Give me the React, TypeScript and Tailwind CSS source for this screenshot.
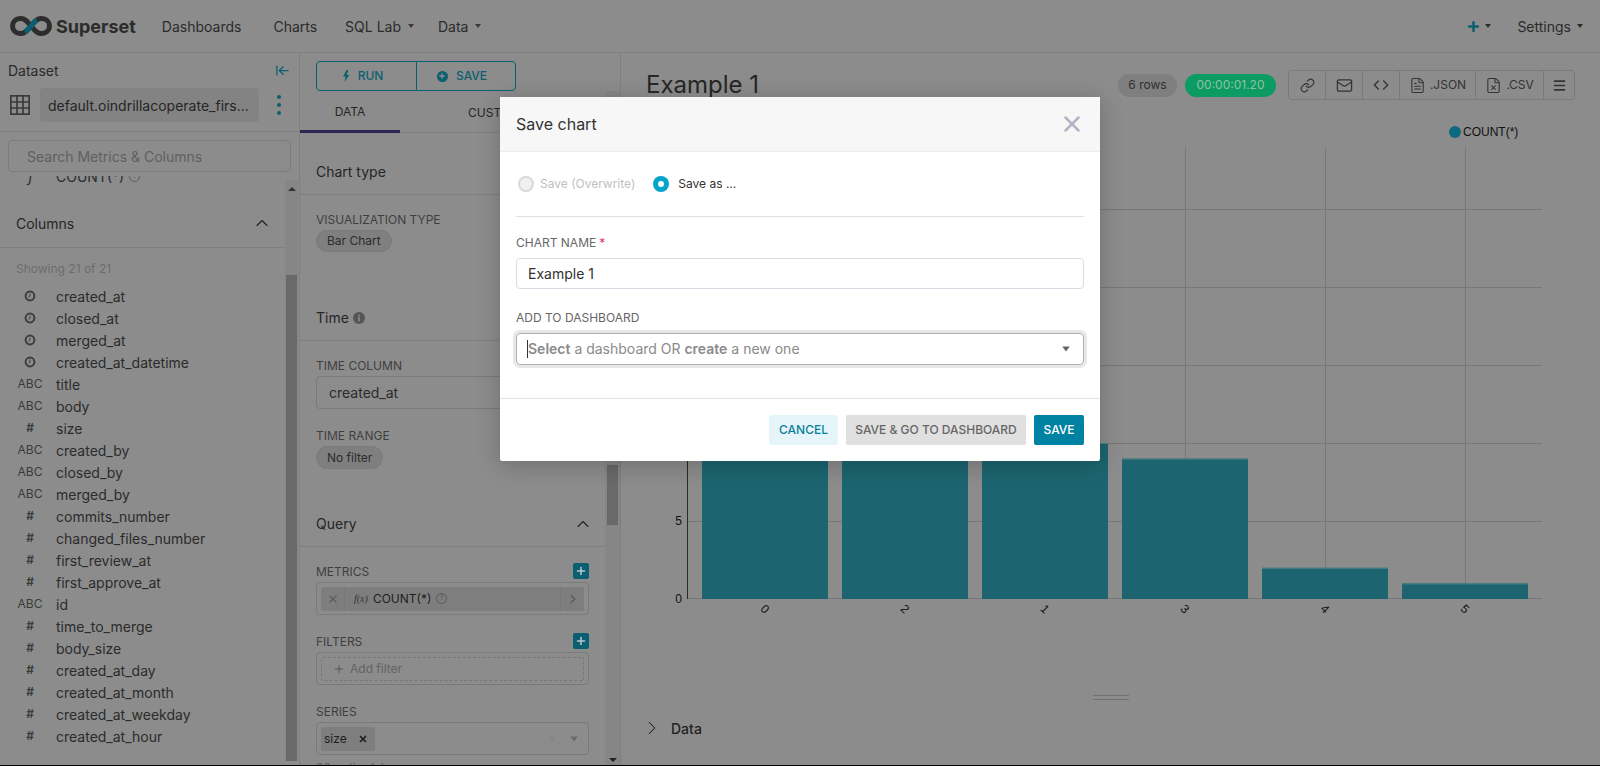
import React from "react";
import { ChevronRight, ChevronUp, Code, FileText, FileX, Link, Mail, Menu, X, Plus, ArrowLeftToLine } from "lucide-react";

const Caret = ({ className = "border-t-[#3a3a3a]" }: { className?: string }) => (
  <span className={"inline-block h-0 w-0 border-x-[3.5px] border-t-[4px] border-x-transparent " + className} />
);

const Clock = () => (
  <svg width="12" height="12" viewBox="0 0 12 12" fill="none" stroke="#3d3d3d">
    <circle cx="6" cy="6" r="4.4" strokeWidth="2" />
    <path d="M6 3.6V6.2L4.4 7.4" strokeWidth="1" />
  </svg>
);

const InfoDot = () => (
  <svg width="12" height="12" viewBox="0 0 12 12">
    <circle cx="6" cy="6" r="6" fill="#555" />
    <rect x="5.2" y="5" width="1.6" height="4.4" fill="#8c8c8c" />
    <circle cx="6" cy="3.4" r="1" fill="#8c8c8c" />
  </svg>
);

const TableIcon = () => (
  <svg width="20" height="20" viewBox="0 0 20 20" fill="none" stroke="#3a3a3a" strokeWidth="1.7">
    <rect x="0.85" y="0.85" width="18.3" height="18.3" />
    <path d="M7 1V19M13 1V19M1 7H19M1 13H19" />
  </svg>
);

const Bolt = () => (
  <svg width="8" height="12" viewBox="0 0 8 12" fill="currentColor">
    <path d="M4.6 0L1 6.4H3.6L2.4 12L7.4 4.8H4.6L6.4 0Z" />
  </svg>
);

const columns: [string, string][] = [
  ["t", "created_at"], ["t", "closed_at"], ["t", "merged_at"], ["t", "created_at_datetime"],
  ["a", "title"], ["a", "body"], ["n", "size"], ["a", "created_by"], ["a", "closed_by"], ["a", "merged_by"],
  ["n", "commits_number"], ["n", "changed_files_number"], ["n", "first_review_at"], ["n", "first_approve_at"],
  ["a", "id"], ["n", "time_to_merge"], ["n", "body_size"], ["n", "created_at_day"], ["n", "created_at_month"],
  ["n", "created_at_weekday"], ["n", "created_at_hour"],
];

const Label = ({ children }: { children: React.ReactNode }) => (
  <div className="h-4 pt-px text-[12px] leading-4 text-[#3f3f3f]">{children}</div>
);

const SectionHead = ({ children, className }: { children: React.ReactNode; className: string }) => (
  <div className={"flex h-[46px] items-center justify-between border-b border-[#7f7f7f] pl-4 pr-3 text-[14px] text-[#262626] " + className}>
    {children}
  </div>
);

const AddBtn = () => (
  <span className="flex h-4 w-4 items-center justify-center rounded-[2px] bg-[#0c5f70] text-[#b8c9cd]">
    <Plus size={12} strokeWidth={3} />
  </span>
);

const Pill = ({ children, className }: { children: React.ReactNode; className: string }) => (
  <div className={"inline-flex items-center rounded-full border border-[#7a7a7a] bg-[#7f7f7f] px-[10px] text-[12px] text-[#2b2b2b] " + className}>
    {children}
  </div>
);

const Seg = ({ children, w, last }: { children: React.ReactNode; w: string; last?: boolean }) => (
  <div className={"flex h-full items-center justify-center gap-[4px] text-[12px] text-[#333] " + w + (last ? "" : " border-r border-[#797979]")}>
    {children}
  </div>
);

function Chart() {
  const bars: [number, number][] = [[702, 10], [842, 10], [982, 10], [1122, 9], [1262, 2], [1402, 1]];
  const base = 599;
  const unit = 15.6;
  return (
    <svg className="block" width="979" height="590" viewBox="621 100 979 590">
      <circle cx="1455" cy="132" r="6" fill="#0c6a80" />
      <text x="1463" y="136" fontFamily="Liberation Sans, sans-serif" fontSize="12" fill="#111">COUNT(*)</text>
      {[765.5, 905.5, 1045.5, 1185.5, 1325.5, 1465.5].map((x) => (
        <line key={x} x1={x} x2={x} y1="147" y2={base} stroke="#787878" />
      ))}
      {[209.5, 287.5, 365.5, 443.5, 521.5, 598.5].map((y) => (
        <line key={y} x1="688" x2="1542" y1={y} y2={y} stroke="#787878" />
      ))}
      <line x1="687.5" x2="687.5" y1="147" y2={base} stroke="#2a2a2a" />
      {bars.map(([x, v]) => (
        <g key={x}>
          <rect x={x} y={base - v * unit} width="126" height={v * unit} fill="#196470" fillOpacity="0.97" />
          <rect x={x} y={base - v * unit} width="126" height="1" fill="#4f8086" />
        </g>
      ))}
      <text x="682" y="525" textAnchor="end" fontFamily="Liberation Sans, sans-serif" fontSize="12" fill="#111">5</text>
      <text x="682" y="603" textAnchor="end" fontFamily="Liberation Sans, sans-serif" fontSize="12" fill="#111">0</text>
      {["0", "2", "1", "3", "4", "5"].map((t, i) => (
        <text key={t} x={765 + i * 140} y="613" textAnchor="middle" transform={`rotate(45 ${765 + i * 140} 609)`} fontFamily="Liberation Sans, sans-serif" fontSize="12" fill="#111">
          {t}
        </text>
      ))}
    </svg>
  );
}

function Sidebar() {
  return (
    <aside className="flex h-full w-[300px] shrink-0 flex-col border-r border-[#7f7f7f]">
      <div className="h-[79px] shrink-0 border-b border-[#7f7f7f]">
        <div className="mt-2 flex h-[18px] items-center justify-between pl-2 pr-[9px] text-[14px] text-[#2b2b2b]">
          <span>Dataset</span>
          <ArrowLeftToLine size={15} className="text-[#0c5f70]" strokeWidth={2} />
        </div>
        <div className="mt-[9px] flex h-[34px] items-center pl-[10px]">
          <TableIcon />
          <div className="ml-[10px] flex h-full w-[219px] items-center rounded-[4px] bg-[#838383] pl-2 text-[14px] text-[#262626]">
            default.oindrillacoperate_firs...
          </div>
          <div className="ml-[18px] flex flex-col gap-[4px]">
            <span className="h-1 w-1 rounded-full bg-[#0c5f70]" />
            <span className="h-1 w-1 rounded-full bg-[#0c5f70]" />
            <span className="h-1 w-1 rounded-full bg-[#0c5f70]" />
          </div>
        </div>
      </div>
      <div className="mx-2 mt-2 flex h-[32px] shrink-0 items-center rounded-[4px] border border-[#7a7a7a] pl-[18px] text-[14px] text-[#606060]">
        Search Metrics &amp; Columns
      </div>
      <div className="flex min-h-0 flex-1 pr-px">
        <div className="mt-[4px] min-w-0 flex-1 overflow-hidden">
          <div className="-mt-[11px] flex h-[22px] items-center text-[14px] text-[#2b2b2b]">
            <span className="w-[56px] pl-[28px] italic">f</span>
            <span>COUNT(*)</span>
            <span className="ml-[5px] flex h-[11px] w-[11px] items-center justify-center rounded-full border border-[#5c5c5c] text-[7px] text-[#5c5c5c]">?</span>
          </div>
          <SectionHead className="mt-[14px] !h-[47px] !pb-[2px] !pr-[13px]">
            <span>Columns</span>
            <ChevronUp size={20} strokeWidth={1.3} className="text-[#222]" />
          </SectionHead>
          <div className="mt-[13px] h-4 pl-4 text-[12px] leading-4 text-[#6c6c6c]">Showing 21 of 21</div>
          <div className="mt-[8px]">
            {columns.map(([k, name]) => (
              <div key={name} className="flex h-[22px] items-center text-[14px] text-[#2b2b2b]">
                <span className="flex w-[60px] justify-center text-[12px] text-[#3a3a3a]">
                  {k === "t" ? <Clock /> : k === "a" ? "ABC" : <span className="font-semibold">#</span>}
                </span>
                <span className="-ml-[4px]">{name}</span>
              </div>
            ))}
          </div>
        </div>
        <div className="mt-[8px] mb-[4px] flex w-[13px] shrink-0 flex-col bg-[#868686]">
          <div className="flex h-[16px] items-center justify-center pt-[2px]">
            <span className="h-0 w-0 border-x-[4px] border-b-[4px] border-x-transparent border-b-[#333]" />
          </div>
          <div className="mx-px mt-[79px] flex-1 bg-[#696969]" />
        </div>
      </div>
    </aside>
  );
}

function Controls() {
  return (
    <section className="flex h-full w-[321px] shrink-0 flex-col border-r border-[#7f7f7f]">
      <div className="h-[38px] shrink-0 pl-4 pt-2">
        <div className="flex h-[30px] w-[200px] rounded-[4px] border border-[#0c5f70] text-[12px] font-medium text-[#0c5f70]">
          <div className="flex w-[100px] items-center justify-center gap-[8px] border-r border-[#0c5f70] pr-2">
            <Bolt />
            RUN
          </div>
          <div className="flex flex-1 items-center justify-center gap-[8px] pr-2">
            <span className="flex h-[11px] w-[11px] items-center justify-center rounded-full bg-[#0c5f70] text-[#8c8c8c]">
              <Plus size={8} strokeWidth={4} />
            </span>
            SAVE
          </div>
        </div>
      </div>
      <div className="flex min-h-0 flex-1">
        <div className="w-[305px] shrink-0 overflow-hidden">
          <div className="flex h-[42px] border-b border-[#7f7f7f] text-[12px] text-[#262626]">
            <div className="flex h-[42px] w-[100px] shrink-0 items-center justify-center border-b-[3px] border-[#2a2850] pt-[2px]">DATA</div>
            <div className="flex h-[42px] w-[160px] items-center pl-[68px] pt-[2px]">CUSTOMIZE</div>
          </div>
          <SectionHead className="mt-4">Chart type</SectionHead>
          <div className="pl-4">
            <div className="mt-4"><Label>VISUALIZATION TYPE</Label></div>
            <Pill className="mt-[3px] h-[22px]">Bar Chart</Pill>
          </div>
          <SectionHead className="mt-[43px] !justify-start gap-[4px]">
            Time <InfoDot />
          </SectionHead>
          <div className="px-4">
            <div className="mt-4"><Label>TIME COLUMN</Label></div>
            <div className="mt-[3px] flex h-[33px] items-center rounded-[4px] border border-[#7a7a7a] pl-3 text-[14px] text-[#2b2b2b]">created_at</div>
            <div className="mt-[18px]"><Label>TIME RANGE</Label></div>
            <Pill className="mt-[3px] h-[23px]">No filter</Pill>
          </div>
          <SectionHead className="mt-[32px]">
            <span>Query</span>
            <ChevronUp size={20} strokeWidth={1.3} className="text-[#222]" />
          </SectionHead>
          <div className="px-4">
            <div className="mt-4 flex h-4 items-center justify-between"><Label>METRICS</Label><AddBtn /></div>
            <div className="mt-[3px] flex h-[33px] items-center rounded-[4px] border border-[#7a7a7a] px-[4px]">
              <div className="flex h-[24px] flex-1 items-center rounded-[2px] bg-[#7e7e7e] text-[12px] text-[#1f1f1f]">
                <span className="flex h-full w-[24px] items-center justify-center border-r border-[#777]"><X size={12} strokeWidth={2.5} className="text-[#5c5c5c]" /></span>
                <span className="ml-[9px] mr-[5px] font-['Liberation_Serif',serif] text-[10px] italic text-[#333]">f(x)</span>
                <span>COUNT(*)</span>
                <span className="ml-[5px] flex h-[11px] w-[11px] items-center justify-center rounded-full border border-[#5c5c5c] text-[7px] text-[#5c5c5c]">?</span>
                <span className="ml-auto flex h-full w-[24px] items-center justify-center border-l border-[#777]"><ChevronRight size={14} strokeWidth={2.5} className="text-[#5c5c5c]" /></span>
              </div>
            </div>
            <div className="mt-[18px] flex h-4 items-center justify-between"><Label>FILTERS</Label><AddBtn /></div>
            <div className="mt-[3px] flex h-[33px] items-center rounded-[4px] border border-[#7a7a7a] px-[4px]">
              <div className="flex h-[24px] flex-1 items-center rounded-[2px] border border-dashed border-[#777] pl-[11px] text-[12px] text-[#626262]">
                <Plus size={12} strokeWidth={2} className="mr-[5px] text-[#555]" />
                Add filter
              </div>
            </div>
            <div className="mt-[18px] flex h-4 items-center"><Label>SERIES</Label></div>
            <div className="mt-[3px] flex h-[33px] items-center rounded-[4px] border border-[#7a7a7a] pl-[4px] pr-[11px]">
              <div className="flex h-[24px] w-[54px] items-center justify-between rounded-[2px] bg-[#7e7e7e] px-[3px] pr-[7px] text-[12px] text-[#1f1f1f]">
                size <X size={10} strokeWidth={4} className="text-[#1f1f1f]" />
              </div>
              <X size={10} strokeWidth={1.5} className="ml-auto text-[#777]" />
              <Caret className="ml-[14px] scale-125 border-t-[#6a6a6a]" />
            </div>
            <div className="mt-[4px] text-[12px] text-[#5c5c5c]">80 option(s)</div>
          </div>
        </div>
        <div className="flex w-[15px] shrink-0 flex-col items-center bg-[#868686] pb-[3px]">
          <div className="mt-[374px] h-[60px] w-[11px] bg-[#696969]" />
          <span className="mt-auto h-0 w-0 border-x-[4px] border-t-[4px] border-x-transparent border-t-[#222]" />
        </div>
      </div>
    </section>
  );
}

function Results() {
  return (
    <main className="flex h-full min-w-0 flex-1 flex-col">
      <div className="flex h-[47px] shrink-0 items-start justify-between px-[25px] pt-[17px]">
        <div className="text-[24px] leading-[30px] text-[#262626]">Example 1</div>
        <div className="flex h-[30px] items-center">
          <div className="flex h-[23px] w-[59px] items-center justify-center rounded-full bg-[#7f7f7f] text-[12px] text-[#2f2f2f]">6 rows</div>
          <div className="ml-2 flex h-[23px] w-[91px] items-center justify-center rounded-full bg-[#0b9b63] text-[12px] text-[#8fc3a5]">00:00:01.20</div>
          <div className="ml-[12px] flex h-[30px] w-[287px] items-center rounded-[4px] border border-[#797979]">
            <Seg w="w-[37px]"><Link size={15} strokeWidth={1.8} /></Seg>
            <Seg w="w-[37px]"><Mail size={17} strokeWidth={1.8} /></Seg>
            <Seg w="w-[37px]"><Code size={16} strokeWidth={2} /></Seg>
            <Seg w="w-[76px]"><FileText size={17} strokeWidth={1.5} />.JSON</Seg>
            <Seg w="w-[68px]"><FileX size={17} strokeWidth={1.5} />.CSV</Seg>
            <Seg w="flex-1" last><Menu size={15} strokeWidth={2.5} /></Seg>
          </div>
        </div>
      </div>
      <Chart />
      <div className="mx-auto mt-[5px] h-[5px] w-[36px] shrink-0 border-y border-[#717171]" />
      <div className="mt-[17px] flex h-[22px] shrink-0 items-center pl-5 text-[14px] font-medium text-[#1f1f1f]">
        <ChevronRight size={22} strokeWidth={1.1} className="mr-2" />
        Data
      </div>
    </main>
  );
}

function SaveModal() {
  return (
    <div className="absolute left-[500px] top-[97px] flex h-[364px] w-[600px] flex-col rounded-[2px] bg-white shadow-[0_4px_24px_rgba(0,0,0,0.22)]">
      <div className="flex h-[55px] shrink-0 items-center justify-between border-b border-[#ececec] bg-[#f7f7f7] pl-4 pr-[15px] text-[16px] text-[#323232]">
        Save chart
        <X size={26} strokeWidth={2.3} className="text-[#b4b2c4]" />
      </div>
      <div className="px-4">
        <div className="flex h-[65px] items-center border-b border-[#e0e0e0] pl-[2px] text-[12px]">
          <span className="h-4 w-4 rounded-full border-2 border-[#d9d9d9] bg-[#f0f0f0]" />
          <span className="ml-[6px] text-[#bfbfbf]">Save (Overwrite)</span>
          <span className="ml-[18px] flex h-4 w-4 items-center justify-center rounded-full bg-[#00a5c9]">
            <span className="h-[6px] w-[6px] rounded-full bg-white" />
          </span>
          <span className="ml-[9px] text-[#323232]">Save as ...</span>
        </div>
        <div className="mt-[18px] flex h-4 items-center text-[12px] text-[#666]">
          CHART NAME<span className="ml-[3px] text-[#e0307a]">*</span>
        </div>
        <div className="mt-[7px] flex h-[31px] items-center rounded-[4px] border border-[#dcdae6] pl-[11px] text-[14px] text-[#323232]">Example 1</div>
        <div className="mt-[20px] h-4 pt-px text-[12px] leading-4 text-[#666]">ADD TO DASHBOARD</div>
        <div className="relative mt-[8px] flex h-[32px] items-center rounded-[4px] border border-[#b0b0b0] pb-px pl-[10px] text-[14px] text-[#8a8a8a] shadow-[0_0_0_3px_#e8e8e8]">
          <span className="h-[18px] w-px bg-[#333]" />
          <span><b className="font-semibold">Select</b> a dashboard OR <b className="font-semibold">create</b> a new one</span>
          <Caret className="ml-auto mr-[14px] scale-125 border-t-[#666]" />
        </div>
      </div>
      <div className="mt-[33px] flex flex-1 items-start justify-end gap-2 border-t border-[#e4e4e4] pr-4 pt-4 text-[12px] font-medium">
        <div className="flex h-[30px] w-[69px] items-center justify-center rounded-[2px] bg-[#e5f5f9] text-[#0b7f9c]">CANCEL</div>
        <div className="flex h-[30px] w-[180px] items-center justify-center rounded-[2px] bg-[#e0e0e0] text-[#666]">SAVE &amp; GO TO DASHBOARD</div>
        <div className="flex h-[30px] w-[50px] items-center justify-center rounded-[2px] bg-[#0082a3] text-white">SAVE</div>
      </div>
    </div>
  );
}

export default function App() {
  return (
    <div className="relative h-[766px] w-[1600px] overflow-hidden bg-black font-['Inter',sans-serif]">
      <div className="flex h-[765px] flex-col bg-[#8c8c8c]">
        <header className="flex h-[53px] shrink-0 items-center justify-between border-b border-[#7f7f7f] pr-[17px] text-[14px] text-[#2b2b2b]">
          <div className="flex items-center">
            <svg className="ml-[10px]" width="42" height="22" viewBox="0 0 42 22" fill="none" strokeWidth="5">
              <path d="M11 3.5C5.5 3.5 2.5 7 2.5 11C2.5 15 5.5 18.5 11 18.5C15 18.5 17.5 15 21 11C24.5 7 27 3.5 31 3.5C36.5 3.5 39.5 7 39.5 11C39.5 15 36.5 18.5 31 18.5C27 18.5 24.5 15 21 11C17.5 7 15 3.5 11 3.5Z" stroke="#2d2d2d" />
              <path d="M15 17C17.5 15.5 19 13.5 21 11C23 8.5 24.5 6.5 27 5" stroke="#0c5f70" />
            </svg>
            <span className="ml-[4px] text-[18px] font-bold text-[#2b2b2b]">Superset</span>
            <span className="ml-[26px]">Dashboards</span>
            <span className="ml-[32px]">Charts</span>
            <span className="ml-[28px] flex items-center gap-[7px]">SQL Lab <Caret /></span>
            <span className="ml-[24px] flex items-center gap-[7px]">Data <Caret /></span>
          </div>
          <div className="flex items-center">
            <Plus size={15} strokeWidth={4} className="text-[#0c5f70]" />
            <Caret className="ml-[4px]" />
            <span className="ml-[26px]">Settings</span>
            <Caret className="ml-[6px]" />
          </div>
        </header>
        <div className="flex min-h-0 flex-1">
          <Sidebar />
          <Controls />
          <Results />
        </div>
      </div>
      <SaveModal />
    </div>
  );
}
